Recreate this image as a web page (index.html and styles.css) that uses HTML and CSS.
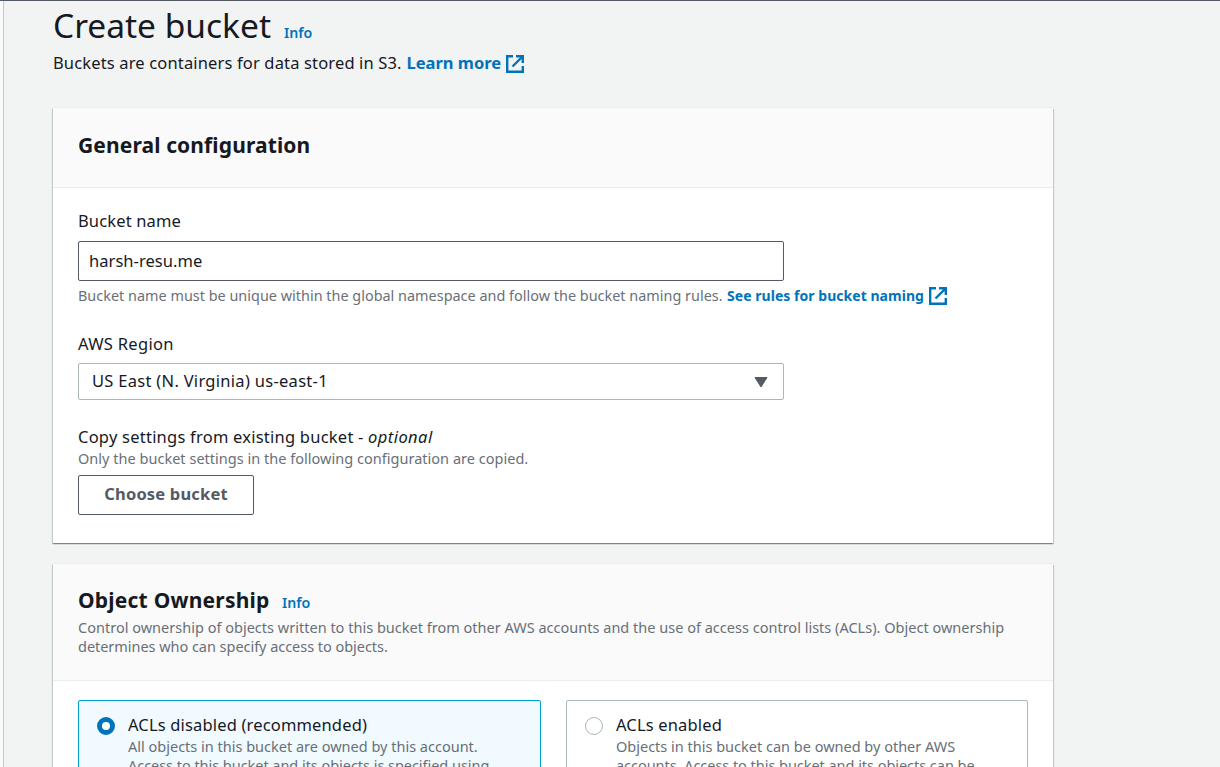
FILE: index.html
```html
<!DOCTYPE html>
<html lang="en">
<head>
<meta charset="utf-8">
<title>Create bucket</title>
<link rel="stylesheet" href="styles.css">
</head>
<body>
<main class="page">
  <header class="page-header">
    <div class="title-row"><h1>Create bucket</h1><a class="info info-title">Info</a></div>
    <p class="lead"><span class="lead-text">Buckets are containers for data stored in S3.</span><a class="link lead-link">Learn more</a><svg class="ext" viewBox="0 0 18 18"><path d="M7 1.2H1.2v15.6h15.6V11M10 1.2h6.8V8M16.5 1.5L6.5 11.5"/></svg></p>
  </header>

  <section class="card general">
    <div class="card-header"><h2 class="h-general">General configuration</h2></div>
    <div class="card-body">
      <label class="label l-name">Bucket name</label>
      <div class="input"><span class="v-name">harsh-resu.me</span></div>
      <p class="hint"><span class="hint-name">Bucket name must be unique within the global namespace and follow the bucket naming rules.</span><a class="link hint-link">See rules for bucket naming</a><svg class="ext" viewBox="0 0 18 18"><path d="M7 1.2H1.2v15.6h15.6V11M10 1.2h6.8V8M16.5 1.5L6.5 11.5"/></svg></p>
      <label class="label l-region">AWS Region</label>
      <div class="select"><span class="v-region">US East (N. Virginia) us-east-1</span><svg class="caret" viewBox="0 0 14 11"><path d="M1 .5h12L7 10z"/></svg></div>
      <label class="label l-copy"><span class="copy-text">Copy settings from existing bucket -</span><em class="optional">optional</em></label>
      <p class="hint-copy">Only the bucket settings in the following configuration are copied.</p>
      <button class="button">Choose bucket</button>
    </div>
  </section>

  <section class="card ownership">
    <div class="card-header">
      <div class="title-row"><h2 class="h-owner">Object Ownership</h2><a class="info info-owner">Info</a></div>
      <p class="desc">Control ownership of objects written to this bucket from other AWS accounts and the use of access control lists (ACLs). Object ownership<br><span class="tight">determines who can specify access to objects.</span></p>
    </div>
    <div class="tiles">
      <div class="tile selected">
        <span class="radio"></span>
        <div class="tile-text">
          <div class="tile-title">ACLs disabled (recommended)</div>
          <p class="tile-desc">All objects in this bucket are owned by this account.<br><span class="tight">Access to this bucket and its objects is specified using</span></p>
        </div>
      </div>
      <div class="tile">
        <span class="radio"></span>
        <div class="tile-text">
          <div class="tile-title">ACLs enabled</div>
          <p class="tile-desc">Objects in this bucket can be owned by other AWS<br><span class="tight">accounts. Access to this bucket and its objects can be</span></p>
        </div>
      </div>
    </div>
  </section>
</main>
</body>
</html>
```
FILE: styles.css
```css
* { box-sizing: border-box; }
html, body { margin: 0; height: 100%; overflow: hidden; }
body {
  background: #f2f3f3;
  border-top: 1px solid #545b64;
  font-family: "Noto Sans", "Open Sans", sans-serif;
  font-size: 16.5px;
  color: #16191f;
}
h1, h2, p { margin: 0; font-weight: 400; }
.page {
  height: 766px;
  overflow: hidden;
  margin-left: 3px;
  border-left: 1px solid #c3c8ca;
  padding-left: 49px;
  box-shadow: -3px 0 0 #fafafa;
}
.title-row { display: flex; align-items: baseline; white-space: nowrap; }
.page-header { height: 107px; }
.page-header .title-row { height: 48px; }
h1 { font-size: 33.5px; line-height: 48px; width: 231px; }
.lead, .hint { display: flex; align-items: center; white-space: nowrap; }
.lead { height: 27px; line-height: 27px; }
.lead-text { width: 353.5px; letter-spacing: .15px; }
.link, .info { color: #0073bb; font-weight: 600; }
.link { font-weight: 700; }
.info { font-size: 14.2px; }
.lead-link { width: 99px; }
.ext { width: 18px; height: 18px; flex: none; fill: none; stroke: #0073bb; stroke-width: 2.4; margin-top: 1px; }
.lead .ext { margin-top: 2px; }

.card {
  width: 1000px;
  background: #fff;
  white-space: nowrap;
  box-shadow: 0 1px 1px rgba(0, 28, 36, .3), 1px 1px 1px rgba(0, 28, 36, .15), -1px 1px 1px rgba(0, 28, 36, .15), 0 -1px 0 #eaeded;
}
.general { height: 435px; margin-bottom: 21px; }
.ownership { height: 420px; }
.card-header { background: #fafafa; border-bottom: 1px solid #eaeded; padding: 0 25px; }
.general .card-header { height: 80px; padding-top: 21px; }
.ownership .card-header { height: 117px; padding-top: 20px; }
h2 { font-size: 21px; font-weight: 700; line-height: 32px; letter-spacing: .12px; }
.h-owner { width: 204px; letter-spacing: .22px; }

.card-body { padding: 20px 25px 0; }
.label { display: flex; height: 26px; line-height: 26px; letter-spacing: .15px; }
.l-name { margin-bottom: 7px; }
.input, .select { width: 706px; border-radius: 2px; display: flex; align-items: center; background: #fff; }
.input { height: 40px; border: 1px solid #545b64; padding: 0 0 2px 10px; letter-spacing: .05px; }
.hint { height: 30px; padding-bottom: 2px; font-size: 14.4px; color: #687078; }
.hint-name { width: 649px; letter-spacing: .02px; }
.hint-link { width: 202px; font-size: 14px; letter-spacing: .04px; }
.l-region { margin: 20px 0 6px; letter-spacing: .3px; }
.select { height: 37px; border: 1px solid #aab7b8; padding: 0 15px 2px 13px; justify-content: space-between; letter-spacing: .29px; }
.caret { width: 14px; height: 11px; fill: #545b64; stroke: #545b64; stroke-linejoin: round; margin-top: 4px; }
.l-copy { margin-top: 24px; height: 24px; letter-spacing: .23px; }
.copy-text { width: 290px; }
.optional { letter-spacing: .45px; }
.hint-copy { height: 27px; line-height: 20px; font-size: 14.5px; color: #687078; letter-spacing: .02px; }
.button {
  display: flex; align-items: center; justify-content: center;
  width: 176px; height: 40px; padding: 0 0 3px;
  border: 1px solid #545b64; border-radius: 2px; background: #fff;
  font: 700 16.5px "Noto Sans", sans-serif; color: #545b64; letter-spacing: .17px;
}
.desc { font-size: 14.5px; line-height: 19px; color: #687078; margin-top: 2px; letter-spacing: .01px; }

.tiles { display: grid; grid-template-columns: 463px 462px; column-gap: 25px; padding: 19px 25px 0; }
.tile { display: flex; height: 110px; border: 1px solid #aab7b8; border-radius: 2px; padding: 11px 18px; }
.tile.selected { border-color: #00a1c9; background: #f1faff; }
.radio { flex: none; width: 18px; height: 18px; margin: 5px 13px 0 0; border: 1px solid #aab7b8; border-radius: 50%; background: #fff; }
.selected .radio { border: 5px solid #0073bb; }
.tile-title { line-height: 25px; letter-spacing: .16px; }
.tile-desc { font-size: 14.5px; line-height: 19px; color: #687078; }
.tight { letter-spacing: -.04px; }
```
